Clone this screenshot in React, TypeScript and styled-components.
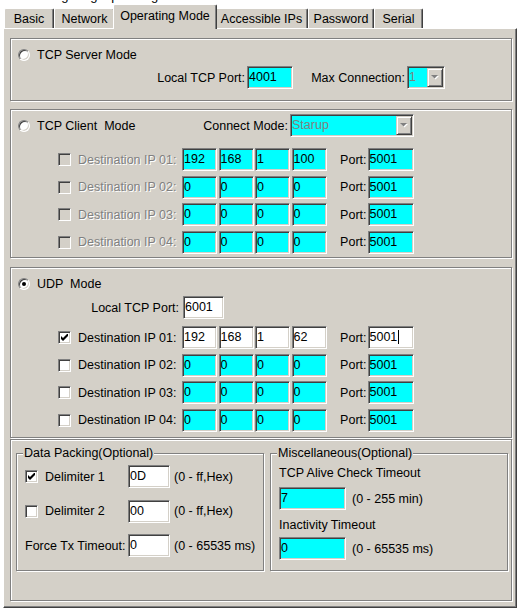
import React from 'react';
import styled, { createGlobalStyle, css } from 'styled-components';

const GlobalStyle = createGlobalStyle`
  html, body {
    margin: 0;
    padding: 0;
    background: #fff;
  }
  body {
    font-family: 'Liberation Sans', Arial, sans-serif;
    font-size: 12.5px;
    color: #000;
    overflow: hidden;
  }
`;

const Page = styled.div`
  width: 514px;
  padding-left: 3px;
`;

const TitleClip = styled.div`
  height: 4px;
  overflow: hidden;
`;

const Title = styled.div`
  margin-top: -12px;
  padding-left: 28px;
  font-size: 13px;
  line-height: 15px;
`;

const TabStrip = styled.div`
  position: relative;
  z-index: 1;
  display: flex;
  align-items: flex-end;
  height: 24px;
  padding-left: 1px;
`;

const Tab = styled.div<{ $w: number; $active?: boolean }>`
  box-sizing: border-box;
  flex: none;
  width: ${p => p.$w}px;
  height: 20px;
  display: flex;
  align-items: center;
  justify-content: center;
  border: 1px solid #fff;
  border-right-color: #404040;
  border-bottom: none;
  border-radius: 2px 2px 0 0;
  box-shadow: inset -1px 0 0 #808080;
  background: #d4d0c8;
  white-space: nowrap;

  ${p =>
    p.$active &&
    css`
      position: relative;
      z-index: 2;
      width: ${p.$w + 4}px;
      height: 25px;
      margin: 0 -2px -1px;
      padding-bottom: 3px;
    `}
`;

const Panel = styled.div`
  box-sizing: border-box;
  width: 514px;
  display: flex;
  flex-direction: column;
  padding: 9px 4px 6px 6px;
  border: 1px solid;
  border-color: #fff #404040 #404040 #fff;
  box-shadow: inset -1px -1px 0 #808080;
  background: #d4d0c8;
`;

const Group = styled.div<{ $top: number; $bottom: number; $gapBefore?: number }>`
  display: flex;
  flex-direction: column;
  margin-top: ${p => p.$gapBefore ?? 0}px;
  padding-top: ${p => p.$top}px;
  padding-bottom: ${p => p.$bottom}px;
  border: 1px solid #808080;
  box-shadow: 1px 1px 0 #fff, inset 1px 1px 0 #fff;
`;

const SplitGroup = styled.div`
  display: flex;
  margin-top: 1px;
  padding: 13px 3px 29px 5px;
  border: 1px solid #808080;
  box-shadow: 1px 1px 0 #fff, inset 1px 1px 0 #fff;
`;

const Row = styled.div<{ $indent: number; $gapBefore?: number }>`
  display: flex;
  align-items: center;
  height: 23px;
  margin-top: ${p => p.$gapBefore ?? 0}px;
  padding-left: ${p => p.$indent}px;
`;

const ModeOption = styled.div<{ $w?: number; $tall?: boolean }>`
  flex: none;
  display: flex;
  align-items: center;
  gap: 7px;
  width: ${p => (p.$w ? `${p.$w}px` : 'auto')};
  height: ${p => (p.$tall ? 23 : 16)}px;
  margin-left: 7px;
  white-space: pre;
`;

const Radio = styled.span`
  box-sizing: border-box;
  flex: none;
  width: 12px;
  height: 12px;
  display: flex;
  align-items: center;
  justify-content: center;
  border: 1px solid;
  border-color: #808080 #fff #fff #808080;
  border-radius: 50%;
  box-shadow: inset 1px 1px 0 #404040, inset -1px -1px 0 #d4d0c8;
  background: #fff;
`;

const RadioDot = styled.span`
  width: 4px;
  height: 4px;
  border-radius: 50%;
  background: #000;
`;

const Check = styled.span<{ $disabled?: boolean }>`
  box-sizing: border-box;
  flex: none;
  width: 13px;
  height: 13px;
  display: flex;
  align-items: center;
  justify-content: center;
  border: 1px solid;
  border-color: #808080 #fff #fff #808080;
  box-shadow: inset 1px 1px 0 #404040, inset -1px -1px 0 #d4d0c8;
  background: ${p => (p.$disabled ? '#d4d0c8' : '#fff')};
`;

const Caption = styled.span<{ $w?: number; $right?: boolean; $disabled?: boolean; $ml?: number; $mr?: number }>`
  flex: none;
  display: flex;
  justify-content: ${p => (p.$right ? 'flex-end' : 'flex-start')};
  width: ${p => (p.$w ? `${p.$w}px` : 'auto')};
  margin-left: ${p => p.$ml ?? 0}px;
  margin-right: ${p => p.$mr ?? 0}px;
  white-space: pre;
  line-height: 16px;
  color: ${p => (p.$disabled ? '#808080' : '#000')};
  text-shadow: ${p => (p.$disabled ? '1px 1px 0 #fff' : 'none')};
`;

const Field = styled.div<{ $w: number; $tone?: 'cyan' | 'white' }>`
  box-sizing: border-box;
  flex: none;
  display: flex;
  align-items: flex-start;
  width: ${p => p.$w}px;
  height: 23px;
  padding: 2px 0 0 1px;
  border: 1px solid;
  border-color: #808080 #fff #fff #808080;
  box-shadow: inset 1px 1px 0 #404040, inset -1px -1px 0 #d4d0c8;
  background: ${p => (p.$tone === 'white' ? '#fff' : '#00ffff')};
  line-height: 16px;
  white-space: nowrap;
  overflow: hidden;
`;

const Caret = styled.span`
  width: 1px;
  height: 14px;
  margin: 1px 0 0 1px;
  background: #000;
`;

const Combo = styled(Field)`
  padding: 1px;
`;

const ComboText = styled.span`
  flex: 1;
  padding-top: 1px;
  color: #808080;
`;

const DropButton = styled.span`
  box-sizing: border-box;
  flex: none;
  width: 16px;
  height: 19px;
  display: flex;
  align-items: center;
  justify-content: center;
  border: 1px solid;
  border-color: #d4d0c8 #404040 #404040 #d4d0c8;
  box-shadow: inset 1px 1px 0 #fff, inset -1px -1px 0 #808080;
  background: #d4d0c8;
`;

const DestList = styled.div<{ $gapBefore: number }>`
  display: flex;
  flex-direction: column;
  gap: 4.5px;
  margin-top: ${p => p.$gapBefore}px;
`;

const IpBox = styled.div`
  flex: none;
  display: flex;
  gap: 1.5px;
  margin: 0 14px 0 3px;
`;

const FieldBox = styled.div<{ $w: number }>`
  position: relative;
  box-sizing: border-box;
  flex: none;
  width: ${p => p.$w}px;
  border: 1px solid #808080;
  box-shadow: 1px 1px 0 #fff, inset 1px 1px 0 #fff;
  & + & {
    margin-left: 6px;
  }
`;

const Legend = styled.span`
  position: absolute;
  top: -9px;
  left: 6px;
  padding: 0 1px;
  line-height: 16px;
  background: #d4d0c8;
  white-space: nowrap;
`;

const PackGrid = styled.div`
  display: grid;
  grid-template-columns: 103px 42px auto;
  grid-auto-rows: 23px;
  row-gap: 11.5px;
  align-items: center;
  padding: 11px 0 13px 8px;
`;

const CheckLabel = styled.div`
  display: flex;
  align-items: center;
  gap: 7px;
  line-height: 16px;
`;

const Hint = styled.span`
  margin-left: 4px;
  line-height: 16px;
  white-space: nowrap;
`;

const MiscStack = styled.div`
  display: flex;
  flex-direction: column;
  padding: 11px 0 10px 8px;
`;

const MiscLine = styled.div<{ $gapBefore: number }>`
  display: flex;
  align-items: center;
  margin-top: ${p => p.$gapBefore}px;
  line-height: 16px;
  white-space: nowrap;
`;

const MiscHint = styled.span`
  margin-left: 6px;
`;

const CheckMark = () => (
  <svg width="7" height="7" viewBox="0 0 7 7">
    <path d="M0 2 L2 4 L7 -1 L7 2 L2 7 L0 5 Z" fill="#000" />
  </svg>
);

const DropArrow = () => (
  <svg width="8" height="5" viewBox="0 0 8 5">
    <path d="M1 1 H8 L4.5 4.5 Z" fill="#fff" />
    <path d="M0 0 H7 L3.5 3.5 Z" fill="#808080" />
  </svg>
);

type DestRowProps = {
  n: string;
  ip: string[];
  port: string;
  checked?: boolean;
  disabled?: boolean;
  white?: boolean;
  caret?: boolean;
};

const DestRow = ({ n, ip, port, checked, disabled, white, caret }: DestRowProps) => {
  const tone = white ? 'white' : 'cyan';
  return (
    <Row $indent={47}>
      <Check $disabled={disabled}>{checked && <CheckMark />}</Check>
      <Caption $w={101} $ml={7} $disabled={disabled}>
        Destination IP {n}:
      </Caption>
      <IpBox>
        {ip.map((part, i) => (
          <Field key={i} $w={35} $tone={tone}>
            {part}
          </Field>
        ))}
      </IpBox>
      <Caption $w={26} $mr={1} $right>
        Port:
      </Caption>
      <Field $w={46} $tone={tone}>
        {port}
        {caret && <Caret />}
      </Field>
    </Row>
  );
};

const tabs = [
  { label: 'Basic', w: 50 },
  { label: 'Network', w: 61 },
  { label: 'Operating Mode', w: 100, active: true },
  { label: 'Accessible IPs', w: 93 },
  { label: 'Password', w: 66 },
  { label: 'Serial', w: 49 },
];

const zeros = ['0', '0', '0', '0'];

export default function App() {
  return (
    <Page>
      <GlobalStyle />
      <TitleClip>
        <Title>Configuring Operating Mode</Title>
      </TitleClip>

      <TabStrip>
        {tabs.map(t => (
          <Tab key={t.label} $w={t.w} $active={t.active}>
            {t.label}
          </Tab>
        ))}
      </TabStrip>

      <Panel>
        <Group $top={8} $bottom={11}>
          <ModeOption>
            <Radio />
            TCP Server Mode
          </ModeOption>
          <Row $indent={138} $gapBefore={3}>
            <Caption $w={96} $mr={2} $right>
              Local TCP Port:
            </Caption>
            <Field $w={46}>4001</Field>
            <Caption $w={95} $ml={17} $mr={2} $right>
              Max Connection:
            </Caption>
            <Combo $w={38}>
              <ComboText>1</ComboText>
              <DropButton>
                <DropArrow />
              </DropButton>
            </Combo>
          </Row>
        </Group>

        <Group $top={4} $bottom={3.5} $gapBefore={8}>
          <Row $indent={0}>
            <ModeOption $w={182} $tall>
              <Radio />
              {'TCP Client  Mode'}
            </ModeOption>
            <Caption $w={88} $mr={2} $right>
              Connect Mode:
            </Caption>
            <Combo $w={124}>
              <ComboText>Starup</ComboText>
              <DropButton>
                <DropArrow />
              </DropButton>
            </Combo>
          </Row>
          <DestList $gapBefore={11}>
            <DestRow n="01" ip={['192', '168', '1', '100']} port="5001" disabled />
            <DestRow n="02" ip={zeros} port="5001" disabled />
            <DestRow n="03" ip={zeros} port="5001" disabled />
            <DestRow n="04" ip={zeros} port="5001" disabled />
          </DestList>
        </Group>

        <Group $top={8} $bottom={5.5} $gapBefore={9}>
          <ModeOption>
            <Radio>
              <RadioDot />
            </Radio>
            {'UDP  Mode'}
          </ModeOption>
          <Row $indent={67} $gapBefore={4}>
            <Caption $w={101} $mr={4} $right>
              Local TCP Port:
            </Caption>
            <Field $w={41} $tone="white">
              6001
            </Field>
          </Row>
          <DestList $gapBefore={7}>
            <DestRow n="01" ip={['192', '168', '1', '62']} port="5001" checked white caret />
            <DestRow n="02" ip={zeros} port="5001" />
            <DestRow n="03" ip={zeros} port="5001" />
            <DestRow n="04" ip={zeros} port="5001" />
          </DestList>
        </Group>

        <SplitGroup>
          <FieldBox $w={248}>
            <Legend>Data Packing(Optional)</Legend>
            <PackGrid>
              <CheckLabel>
                <Check>
                  <CheckMark />
                </Check>
                Delimiter 1
              </CheckLabel>
              <Field $w={42} $tone="white">
                0D
              </Field>
              <Hint>(0 - ff,Hex)</Hint>

              <CheckLabel>
                <Check />
                Delimiter 2
              </CheckLabel>
              <Field $w={42} $tone="white">
                00
              </Field>
              <Hint>(0 - ff,Hex)</Hint>

              <CheckLabel>Force Tx Timeout:</CheckLabel>
              <Field $w={42} $tone="white">
                0
              </Field>
              <Hint>(0 - 65535 ms)</Hint>
            </PackGrid>
          </FieldBox>

          <FieldBox $w={238}>
            <Legend>Miscellaneous(Optional)</Legend>
            <MiscStack>
              <MiscLine $gapBefore={0}>TCP Alive Check Timeout</MiscLine>
              <MiscLine $gapBefore={6}>
                <Field $w={67}>7</Field>
                <MiscHint>(0 - 255 min)</MiscHint>
              </MiscLine>
              <MiscLine $gapBefore={7}>Inactivity Timeout</MiscLine>
              <MiscLine $gapBefore={4}>
                <Field $w={67}>0</Field>
                <MiscHint>(0 - 65535 ms)</MiscHint>
              </MiscLine>
            </MiscStack>
          </FieldBox>
        </SplitGroup>
      </Panel>
    </Page>
  );
}
